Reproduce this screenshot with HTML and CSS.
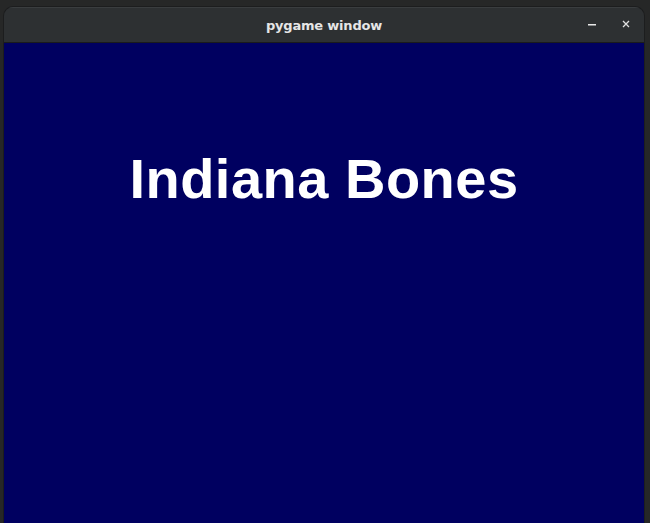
FILE: index.html
```html
<!DOCTYPE html>
<html>
<head>
<meta charset="utf-8">
<link rel="stylesheet" href="styles.css">
</head>
<body>
<div class="desktop">
  <div class="window">
    <div class="titlebar">
      <span class="title">pygame window</span>
      <div class="controls">
        <svg class="btn" width="12" height="12" viewBox="0 0 12 12"><rect x="2" y="6" width="8" height="1.5" fill="#e8e8e8"/></svg>
        <svg class="btn" width="12" height="12" viewBox="0 0 12 12"><path d="M3 3 L9 9 M9 3 L3 9" stroke="#e0e0e0" stroke-width="1.3" fill="none"/></svg>
      </div>
    </div>
    <div class="content">
      <h1 class="heading">Indiana Bones</h1>
    </div>
  </div>
</div>
</body>
</html>
```
FILE: styles.css
```css
html, body {
  margin: 0;
  padding: 0;
  width: 650px;
  height: 523px;
  overflow: hidden;
  background: #262727;
}
.desktop {
  padding: 7px 6px 0 4px;
  height: 516px;
}
.window {
  width: 640px;
  height: 516px;
  display: flex;
  flex-direction: column;
  border-radius: 9px 9px 0 0;
  overflow: hidden;
  background: #2d3032;
  box-shadow: 0 0 0 1px #1c1d1e;
}
.titlebar {
  flex: none;
  position: relative;
  display: flex;
  align-items: center;
  justify-content: center;
  border-top: 1px solid #3a3d3f;
  border-bottom: 1px solid #1a1b1c;
  box-sizing: border-box;
  height: 36px;
}
.title {
  font-family: "DejaVu Sans", sans-serif;
  font-weight: bold;
  font-size: 13px;
  color: #e6e6e6;
  letter-spacing: -0.2px;
}
.controls {
  position: absolute;
  right: 12px;
  top: 10px;
  display: flex;
  gap: 22px;
}
.content {
  flex: 1;
  background: #000060;
  display: flex;
  justify-content: center;
}
.heading {
  margin: 104px 0 0 0;
  font-family: "Liberation Sans", Arial, sans-serif;
  font-weight: bold;
  font-size: 56px;
  line-height: 64px;
  color: #ffffff;
  letter-spacing: 0.5px;
}
```
